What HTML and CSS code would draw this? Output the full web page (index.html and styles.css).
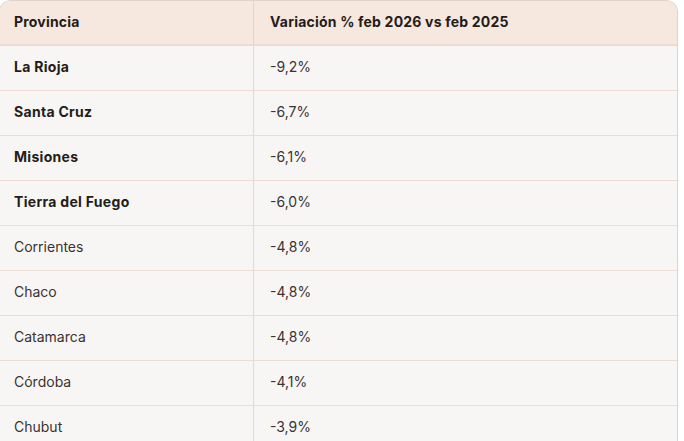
FILE: index.html
```html
<!DOCTYPE html>
<html lang="es">
<head>
<meta charset="utf-8">
<link rel="stylesheet" href="styles.css">
</head>
<body>
<div class="wrap">
  <div class="row head"><div class="c1">Provincia</div><div class="c2">Variación % feb 2026 vs feb 2025</div></div>
  <div class="row b"><div class="c1">La Rioja</div><div class="c2">-9,2%</div></div>
  <div class="row b"><div class="c1">Santa Cruz</div><div class="c2">-6,7%</div></div>
  <div class="row b"><div class="c1">Misiones</div><div class="c2">-6,1%</div></div>
  <div class="row b"><div class="c1">Tierra del Fuego</div><div class="c2">-6,0%</div></div>
  <div class="row"><div class="c1">Corrientes</div><div class="c2">-4,8%</div></div>
  <div class="row"><div class="c1">Chaco</div><div class="c2">-4,8%</div></div>
  <div class="row"><div class="c1">Catamarca</div><div class="c2">-4,8%</div></div>
  <div class="row"><div class="c1">Córdoba</div><div class="c2">-4,1%</div></div>
  <div class="row"><div class="c1">Chubut</div><div class="c2">-3,9%</div></div>
</div>
</body>
</html>
```
FILE: styles.css
```css
html, body { margin: 0; padding: 0; background: #ffffff; }
body { font-family: "Inter", "Liberation Sans", sans-serif; }
.wrap {
  margin-left: -1px;
  width: 677px;
  border: 1px solid #e0d3cb;
  border-bottom: none;
  border-radius: 12px 12px 0 0;
  overflow: hidden;
  background: #f8f6f4;
}
.row {
  display: grid;
  grid-template-columns: 254px 1fr;
  height: 45px;
  box-sizing: border-box;
  border-bottom: 1px solid #ecdcd2;
  font-size: 14px;
  color: #3a3330;
}
.row > div { display: flex; align-items: center; padding-bottom: 3px; }
.c1 { padding-left: 14px; border-right: 1px solid #e8d8ce; }
.c2 { padding-left: 16px; }
.head {
  height: 45px;
  background: #f7e8df;
  border-bottom: 2px solid #ecdcd2;
  color: #241c19;
  font-weight: 700;
  letter-spacing: 0.2px;
}
.head > div { padding-bottom: 2px; }
.head .c1 { border-right-color: #e3d3c9; }
.row.b .c1 { font-weight: 700; color: #241c19; letter-spacing: 0.3px; }
```
